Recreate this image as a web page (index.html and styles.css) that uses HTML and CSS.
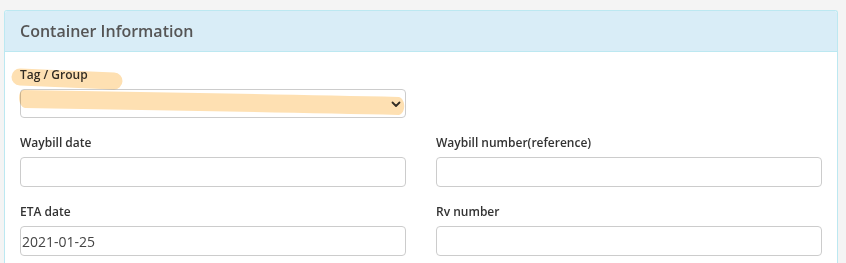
FILE: index.html
```html
<!DOCTYPE html>
<html>
<head>
<meta charset="utf-8">
<link rel="stylesheet" href="styles.css">
</head>
<body>
<div class="panel">
  <div class="panel-heading">Container Information</div>
  <div class="panel-body">
    <div class="row">
      <div class="group">
        <label class="label">Tag / Group</label>
        <div class="select">
          <svg class="chev" width="10" height="7" viewBox="0 0 10 7"><path d="M1.5 1.5 L5 5 L8.5 1.5" fill="none" stroke="#333" stroke-width="1.8" stroke-linecap="round" stroke-linejoin="round"/></svg>
        </div>
      </div>
      <div class="group"></div>
    </div>
    <div class="row">
      <div class="group">
        <label class="label">Waybill date</label>
        <div class="input"></div>
      </div>
      <div class="group">
        <label class="label">Waybill number(reference)</label>
        <div class="input"></div>
      </div>
    </div>
    <div class="row">
      <div class="group">
        <label class="label">ETA date</label>
        <div class="input value">2021-01-25</div>
      </div>
      <div class="group">
        <label class="label">Rv number</label>
        <div class="input"></div>
      </div>
    </div>
    <svg class="marker" width="420" height="80" viewBox="0 0 420 80">
      <line x1="15" y1="25" x2="109" y2="29" stroke="#fee0b2" stroke-width="17" stroke-linecap="round"/>
      <path d="M18 38 C 150 40, 300 43, 394 45 C 401 47, 401 61, 394 63 C 300 61, 150 58, 20 56 C 13 54, 12 40, 18 38 Z" fill="#fee0b2"/>
    </svg>
  </div>
</div>
</body>
</html>
```

FILE: styles.css
```css
html, body {
  margin: 0;
  padding: 0;
  background: #f4f4f4;
}
body {
  padding: 10px 8px 0 4px;
  font-family: "Open Sans", "Liberation Sans", sans-serif;
  color: #333;
  height: 263px;
  overflow: hidden;
  box-sizing: border-box;
}
.panel {
  background: #fff;
  border: 1px solid #bce8f1;
  border-bottom: none;
  border-radius: 3px 3px 0 0;
  height: 253px;
  box-sizing: border-box;
  overflow: hidden;
}
.panel-heading {
  background: #d9edf7;
  border-bottom: 1px solid #bce8f1;
  height: 41px;
  box-sizing: border-box;
  padding: 0 15px;
  display: flex;
  align-items: center;
  font-size: 16px;
  font-weight: 600;
  color: #555;
  border-radius: 2px 2px 0 0;
}
.panel-body {
  position: relative;
  padding: 14px 15px 0;
}
.row {
  display: grid;
  grid-template-columns: 1fr 1fr;
  column-gap: 30px;
}
.group {
  display: flex;
  flex-direction: column;
  margin-bottom: 16px;
}
.label {
  font-size: 12px;
  font-weight: 600;
  line-height: 18px;
  margin-bottom: 5px;
}
.select, .input {
  height: 30px;
  box-sizing: border-box;
  border: 1px solid #ccc;
  border-radius: 4px;
  background: #fff;
}
.select {
  height: 29px;
  display: flex;
  align-items: center;
  justify-content: flex-end;
  padding-right: 4px;
}
.chev {
  display: block;
  margin-top: 1px;
}
.value {
  font-size: 14px;
  color: #444;
  padding-left: 1px;
  display: flex;
  align-items: center;
}
.marker {
  position: absolute;
  left: 0;
  top: 0;
  mix-blend-mode: multiply;
  pointer-events: none;
}
```
